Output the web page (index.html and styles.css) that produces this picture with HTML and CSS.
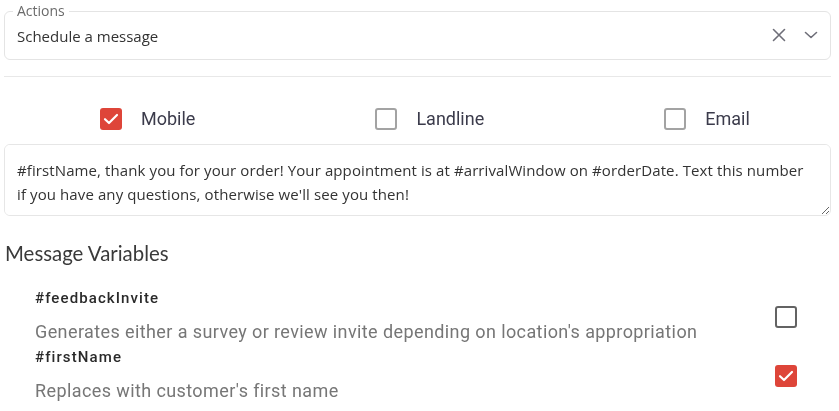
FILE: index.html
```html
<!DOCTYPE html>
<html lang="en">
<head>
<meta charset="utf-8">
<title>Schedule a message</title>
<link rel="stylesheet" href="styles.css">
</head>
<body>
<div class="page">
  <fieldset class="select">
    <legend class="select-legend">Actions</legend>
    <div class="select-row">
      <span class="select-value">Schedule a message</span>
      <span class="select-icons">
        <svg class="icon" width="14" height="14" viewBox="0 0 14 14"><path d="M1.5 1.5 L12.5 12.5 M12.5 1.5 L1.5 12.5" stroke="#6e6e78" stroke-width="1.6" fill="none" stroke-linecap="round"/></svg>
        <svg class="icon" width="14" height="14" viewBox="0 0 14 14"><path d="M1.5 4.5 L7 9.5 L12.5 4.5" stroke="#6e6e78" stroke-width="1.6" fill="none" stroke-linecap="round" stroke-linejoin="round"/></svg>
      </span>
    </div>
  </fieldset>

  <div class="divider"></div>

  <div class="channels">
    <label class="channel">
      <span class="box box-checked"><svg width="22" height="22" viewBox="0 0 22 22"><path d="M5 11.2 L9 15 L17 7" stroke="#fff" stroke-width="2.2" fill="none" stroke-linecap="round" stroke-linejoin="round"/></svg></span>
      <span class="channel-label">Mobile</span>
    </label>
    <label class="channel">
      <span class="box box-light"></span>
      <span class="channel-label">Landline</span>
    </label>
    <label class="channel">
      <span class="box box-light"></span>
      <span class="channel-label">Email</span>
    </label>
  </div>

  <textarea class="message">#firstName, thank you for your order! Your appointment is at #arrivalWindow on #orderDate. Text this number if you have any questions, otherwise we'll see you then!</textarea>

  <h2 class="vars-title">Message Variables</h2>

  <div class="vars">
    <div class="var-row">
      <div class="var-text">
        <div class="var-name">#feedbackInvite</div>
        <div class="var-desc">Generates either a survey or review invite depending on location's appropriation</div>
      </div>
      <span class="box box-dark"></span>
    </div>
    <div class="var-row">
      <div class="var-text">
        <div class="var-name">#firstName</div>
        <div class="var-desc">Replaces with customer's first name</div>
      </div>
      <span class="box box-checked"><svg width="22" height="22" viewBox="0 0 22 22"><path d="M5 11.2 L9 15 L17 7" stroke="#fff" stroke-width="2.2" fill="none" stroke-linecap="round" stroke-linejoin="round"/></svg></span>
    </div>
  </div>
</div>
</body>
</html>
```

FILE: styles.css
```css
* { box-sizing: border-box; }

html, body {
  margin: 0;
  padding: 0;
  background: #fff;
}

.page {
  padding: 3px 8px 0 4px;
  font-family: "Open Sans", "Liberation Sans", sans-serif;
  color: #333;
}

.select {
  margin: 0;
  padding: 0 12px 4px 8px;
  border: 1px solid #e4e4e4;
  border-radius: 6px;
  min-width: 0;
}

.select-legend {
  padding: 0 4px;
  font-size: 14px;
  line-height: 16px;
  color: #6b6b6b;
}

.select-row {
  display: flex;
  align-items: center;
  height: 36px;
  padding-left: 4px;
}

.select-value {
  flex: 1;
  font-size: 15px;
  color: #333;
  margin-top: -2px;
}

.select-icons {
  display: flex;
  align-items: center;
  gap: 18px;
  margin-top: -4px;
}

.icon { display: block; }

.divider {
  height: 1px;
  background: #e8e8e8;
  margin-top: 16px;
}

.channels {
  display: flex;
  align-items: center;
  gap: 180px;
  padding: 31px 0 14px 96px;
}

.channel {
  display: flex;
  align-items: center;
  gap: 19px;
}

.channel-label {
  font-family: Roboto, "Liberation Sans", sans-serif;
  font-size: 18px;
  color: #3b3b4b;
  line-height: 22px;
}

.box {
  width: 22px;
  height: 22px;
  border-radius: 3px;
  flex: none;
  display: block;
}

.box svg { display: block; }

.box-checked {
  background: #de4539;
}

.box-light {
  border: 2px solid #a3a3a3;
}

.box-dark {
  border: 2px solid #636363;
}

.message {
  display: block;
  width: 100%;
  height: 72px;
  margin: 0;
  padding: 13px 16px 20px 12px;
  border: 1px solid #e6e6e6;
  border-radius: 6px;
  font-family: "Open Sans", "Liberation Sans", sans-serif;
  font-size: 15px;
  letter-spacing: 0.1px;
  line-height: 24px;
  color: #333;
  resize: vertical;
  overflow-y: scroll;
  outline: none;
}

.message::-webkit-scrollbar { width: 7px; }
.message::-webkit-scrollbar-track { background: #f1f1f1; }
.message::-webkit-scrollbar-thumb { background: #c8c8c8; }
.message::-webkit-scrollbar-corner { background: #fff; }

.vars-title {
  margin: 25px 0 0 1px;
  font-family: Lato, "Liberation Sans", sans-serif;
  font-weight: 400;
  font-size: 20.4px;
  line-height: 24px;
  color: #3a3a3a;
}

.vars {
  display: flex;
  flex-direction: column;
  gap: 2px;
  padding: 23px 34px 0 31px;
}

.var-row {
  display: flex;
  align-items: center;
}

.var-text {
  flex: 1;
}

.var-name {
  font-family: Roboto, "Liberation Sans", sans-serif;
  font-weight: 500;
  font-size: 15px;
  line-height: 20px;
  letter-spacing: 1.1px;
  color: #2a2a2a;
}

.var-desc {
  margin-top: 11px;
  font-family: Roboto, "Liberation Sans", sans-serif;
  font-size: 18px;
  line-height: 26px;
  letter-spacing: 0.4px;
  color: #767676;
}
```
